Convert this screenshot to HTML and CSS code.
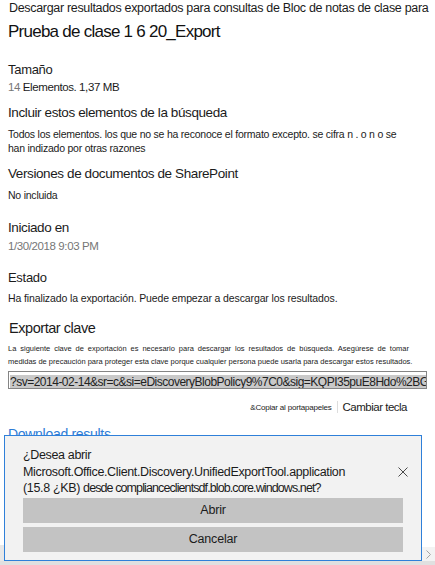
FILE: index.html
```html
<!DOCTYPE html>
<html lang="es">
<head>
    <meta charset="UTF-8">
    <meta name="viewport" content="width=device-width, initial-scale=1.0">
    <title>Exportar resultados</title>
    <link rel="stylesheet" href="styles.css">
</head>
<body>
    <div class="panel">
        <p class="intro">Descargar resultados exportados para consultas de Bloc de notas de clase para</p>
        <h1 class="title">Prueba de clase 1 6 20_Export</h1>

        <h3 class="label size-label">Tamaño</h3>
        <p class="value"><span class="muted">14</span> Elementos. 1,37 MB</p>

        <h3 class="label big include-label">Incluir estos elementos de la búsqueda</h3>
        <p class="value small">Todos los elementos. los que no se ha reconoce el formato excepto. se cifra n . o n o se<br>han indizado por otras razones</p>

        <h3 class="label big versions-label">Versiones de documentos de SharePoint</h3>
        <p class="value small">No incluida</p>

        <h3 class="label big started-label">Iniciado en</h3>
        <p class="value muted">1/30/2018 9:03 PM</p>

        <h3 class="label state-label">Estado</h3>
        <p class="value small status">Ha finalizado la exportación. Puede empezar a descargar los resultados.</p>

        <h3 class="label key-label">Exportar clave</h3>
        <div class="note">
            <span class="note-line justified">La siguiente clave de exportación es necesario para descargar los resultados de búsqueda. Asegúrese de tomar</span>
            <span class="note-line">medidas de precaución para proteger esta clave porque cualquier persona puede usarla para descargar estos resultados.</span>
        </div>
        <div class="key-box"><span class="key-text">?sv=2014-02-14&amp;sr=c&amp;si=eDiscoveryBlobPolicy9%7C0&amp;sig=KQPI35puE8Hdo%2BG3qJv</span></div>
        <div class="key-actions">
            <span class="copy">&amp;Copiar al portapapeles</span>
            <span class="divider"></span>
            <span class="change">Cambiar tecla</span>
        </div>

        <a class="download" href="#">Download results</a>
    </div>

    <div class="hscroll">
        <span class="hscroll-left"></span>
        <span class="hscroll-right">
            <svg width="5" height="9" viewBox="0 0 5 9"><path d="M0.5 0.5l4 4-4 4" fill="none" stroke="#a6a6a6" stroke-width="1"/></svg>
        </span>
    </div>

    <div class="prompt">
        <div class="prompt-head">
            <p class="prompt-text">¿Desea abrir<br>Microsoft.Office.Client.Discovery.UnifiedExportTool.application<br>(15.8 <span class="kb">¿KB)</span> <span class="host">desde complianceclientsdf.blob.core.windows.net?</span></p>
            <svg class="close" width="10" height="10" viewBox="0 0 10 10"><path d="M0.5 0.5l9 9M9.5 0.5l-9 9" stroke="#4a4a4a" stroke-width="1"/></svg>
        </div>
        <button class="prompt-btn first">Abrir</button>
        <button class="prompt-btn">Cancelar</button>
    </div>
</body>
</html>
```

FILE: styles.css
```css
body {
    margin: 0;
    background: #ffffff;
    color: #1b1b1b;
    font-family: "Liberation Sans", Arial, sans-serif;
    width: 435px;
    height: 565px;
    overflow: hidden;
    position: relative;
}
p, h1, h3 {
    margin: 0;
}
.panel {
    padding: 0 8px;
}
.intro {
    font-size: 12.5px;
    line-height: 16px;
    letter-spacing: -0.32px;
    padding-left: 1px;
    white-space: nowrap;
}
.title {
    font-size: 17px;
    font-weight: normal;
    line-height: 24px;
    letter-spacing: -0.75px;
    margin-top: 4px;
    color: #111;
}
.label {
    font-size: 13px;
    font-weight: normal;
    line-height: 18px;
    letter-spacing: -0.3px;
}
.label.big {
    font-size: 13.5px;
    line-height: 20px;
    letter-spacing: -0.4px;
}
.size-label {
    margin-top: 17px;
}
.include-label {
    margin-top: 8px;
}
.versions-label {
    margin-top: 9px;
}
.started-label {
    margin-top: 16px;
}
.state-label {
    margin-top: 15px;
}
.key-label {
    margin-top: 13px;
    font-size: 14.5px;
    line-height: 20px;
    letter-spacing: -0.45px;
    padding-left: 1px;
}
.value {
    font-size: 11.5px;
    line-height: 16px;
    letter-spacing: -0.4px;
}
.value.small {
    font-size: 10.5px;
    line-height: 14px;
    letter-spacing: -0.23px;
    margin-top: 4px;
    white-space: nowrap;
}
.value.status {
    letter-spacing: -0.12px;
}
.muted {
    color: #767676;
}
.note {
    font-size: 7.5px;
    line-height: 13px;
    letter-spacing: 0;
    margin-top: 4px;
    padding-right: 18px;
}
.note-line {
    display: block;
    white-space: nowrap;
}
.note-line.justified {
    white-space: normal;
    text-align: justify;
    text-align-last: justify;
}
.key-box {
    margin-top: 3px;
    border: 1px solid #858585;
    height: 18px;
    box-sizing: border-box;
    overflow: hidden;
    white-space: nowrap;
    padding: 0 0 0 1px;
}
.key-text {
    background: #c9c9c9;
    font-size: 12px;
    line-height: 16px;
    letter-spacing: -0.5px;
    color: #222;
}
.key-actions {
    display: flex;
    justify-content: flex-end;
    align-items: center;
    gap: 5px;
    margin-top: 11px;
    padding-right: 20px;
    height: 14px;
}
.copy {
    font-size: 8px;
    letter-spacing: -0.2px;
}
.divider {
    width: 1px;
    height: 12px;
    background: #dddddd;
}
.change {
    font-size: 11.5px;
    letter-spacing: -0.5px;
}
.download {
    display: block;
    margin-top: 10px;
    font-size: 14px;
    line-height: 20px;
    letter-spacing: -0.3px;
    color: #2e7cd6;
    text-decoration: none;
}
.hscroll {
    position: absolute;
    left: 0;
    right: 0;
    bottom: 0;
    height: 20px;
    border-bottom: 4px solid #e0e0e0;
    box-sizing: border-box;
}
.hscroll-left {
    position: absolute;
    left: 0;
    top: 0;
    width: 4px;
    height: 16px;
    background: #e8e8e8;
}
.hscroll-right {
    position: absolute;
    right: 0;
    top: 2px;
    width: 14px;
    height: 14px;
    background: #f3f3f3;
    display: flex;
    align-items: center;
    justify-content: center;
}
.prompt {
    position: absolute;
    left: 4px;
    top: 435px;
    width: 418px;
    height: 126px;
    box-sizing: border-box;
    background: #f2f2f2;
    border: 1px solid #2f80d9;
    padding: 11px 17px 0 18px;
}
.prompt-head {
    display: flex;
    justify-content: space-between;
    align-items: center;
}
.prompt-text {
    font-size: 12.5px;
    line-height: 16.5px;
    letter-spacing: -0.35px;
    white-space: nowrap;
}
.host {
    letter-spacing: -0.9px;
}
.close {
    margin-right: -4px;
}
.prompt-btn {
    display: block;
    width: 380px;
    height: 25px;
    margin-top: 4px;
    padding: 0;
    border: none;
    background: #c3c3c3;
    font-family: inherit;
    font-size: 12.5px;
    letter-spacing: -0.2px;
    color: #1b1b1b;
}
.prompt-btn.first {
    margin-top: 1px;
}
```
